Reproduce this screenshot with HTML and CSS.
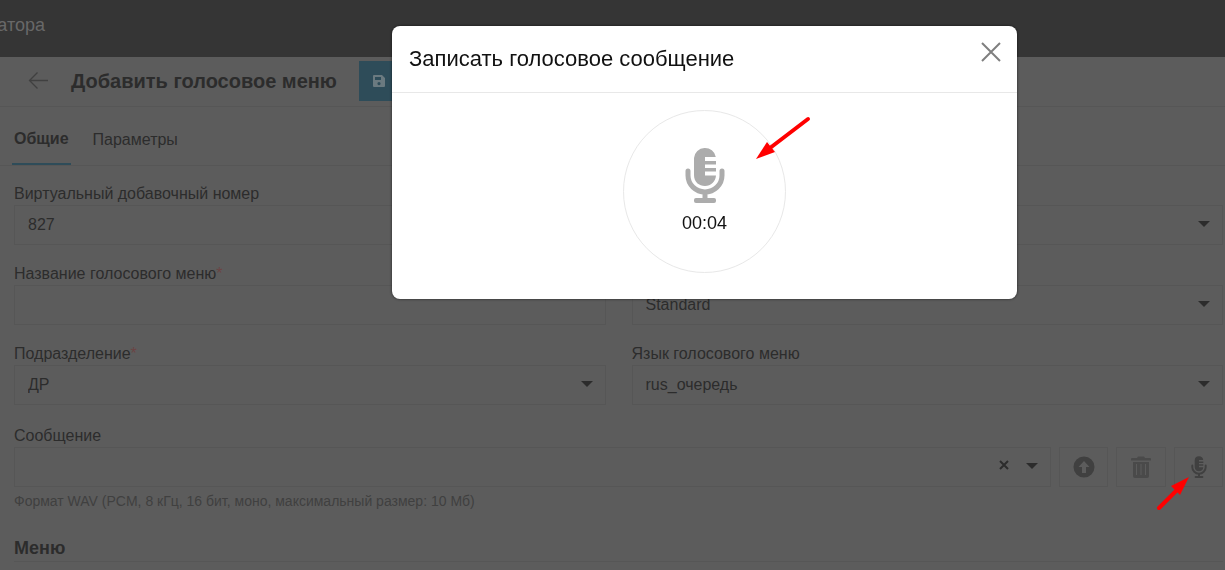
FILE: index.html
```html
<!DOCTYPE html>
<html lang="ru">
<head>
<meta charset="utf-8">
<title>Добавить голосовое меню</title>
<link rel="stylesheet" href="styles.css">
</head>
<body>
<svg class="defs" aria-hidden="true">
  <symbol id="mic" viewBox="0 0 40 56">
    <path d="M9 11a11 11 0 0 1 21.800-1H20v4h11v3.500H20V21h11v3.500H20v4h11c-.5 6-5 10.500-11 10.500S9 35 9 28z"/>
    <path d="M3 24v4.500a17 16.500 0 0 0 34 0V24" fill="none" stroke="currentColor" stroke-width="5" stroke-linecap="round"/>
    <path d="M17.500 46h5v6h-5z"/>
    <rect x="9" y="51" width="22" height="5" rx="2"/>
  </symbol>
</svg>

<header class="topbar"><span class="topbar-title">атора</span></header>

<main>
  <div class="titlebar">
    <button class="back" aria-label="Назад">
      <svg width="20" height="18" viewBox="0 0 20 18" fill="none" stroke="currentColor" stroke-width="1.300"><path d="M20 8.500H1.500M9.500 .500l-8 8 8 8"/></svg>
    </button>
    <h1>Добавить голосовое меню</h1>
    <button class="save" aria-label="Сохранить">
      <svg width="12" height="12" viewBox="0 0 12 12"><path fill="currentColor" fill-rule="evenodd" d="M1 0h8l3 3v8a1 1 0 0 1-1 1H1a1 1 0 0 1-1-1V1a1 1 0 0 1 1-1zM2 2v3h6V2zM6 7a1.600 1.600 0 1 0 0 3.200A1.600 1.600 0 0 0 6 7z"/></svg>
    </button>
  </div>

  <nav class="tabs">
    <a class="tab active" href="#general">Общие</a>
    <a class="tab" href="#params">Параметры</a>
  </nav>

  <form class="form">
    <div class="grid">
      <div class="field">
        <label for="number">Виртуальный добавочный номер</label>
        <input class="control" id="number" value="827">
      </div>
      <div class="field">
        <div class="select"><select class="control" aria-label="Тип"><option></option></select></div>
      </div>
      <div class="field">
        <label for="name">Название голосового меню<span class="required">*</span></label>
        <input class="control" id="name">
      </div>
      <div class="field">
        <div class="select"><select class="control" aria-label="Шаблон"><option>Standard</option></select></div>
      </div>
      <div class="field">
        <label for="dept">Подразделение<span class="required">*</span></label>
        <div class="select"><select class="control" id="dept"><option>ДР</option></select></div>
      </div>
      <div class="field">
        <label for="lang">Язык голосового меню</label>
        <div class="select"><select class="control" id="lang"><option>rus_очередь</option></select></div>
      </div>
    </div>

    <div class="field message">
      <label for="message">Сообщение</label>
      <div class="message-row">
        <div class="select">
          <select class="control" id="message"><option></option></select>
          <button type="button" class="clear" aria-label="Очистить">
            <svg width="10" height="10" viewBox="0 0 10 10" fill="none" stroke="currentColor" stroke-width="2"><path d="M1 1l8 8M9 1L1 9"/></svg>
          </button>
        </div>
        <button type="button" class="tool" aria-label="Загрузить">
          <svg width="22" height="22" viewBox="0 0 22 22"><path fill="currentColor" fill-rule="evenodd" d="M11 .500a10.500 10.500 0 1 0 0 21 10.500 10.500 0 0 0 0-21zM11 5l5.500 6H13v6H9v-6H5.500z"/></svg>
        </button>
        <button type="button" class="tool muted" aria-label="Удалить">
          <svg width="20" height="22" viewBox="0 0 20 22"><path fill="currentColor" fill-rule="evenodd" d="M1 2h5l1-1.500h6L14 2h5q1 0 1 1v1.500H0V3q0-1 1-1zM2 6h16v14q0 2-2 2H4q-2 0-2-2zM5 8v11h1V8zM9.500 8v11h1V8zM14 8v11h1V8z"/></svg>
        </button>
        <button type="button" class="tool" aria-label="Записать">
          <svg width="16" height="22"><use href="#mic"/></svg>
        </button>
      </div>
      <p class="hint">Формат WAV (PCM, 8 кГц, 16 бит, моно, максимальный размер: 10 Мб)</p>
    </div>

    <h2>Меню</h2>
  </form>
</main>

<section class="modal" role="dialog" aria-labelledby="modal-title">
  <div class="modal-head">
    <h3 id="modal-title">Записать голосовое сообщение</h3>
    <button class="close" aria-label="Закрыть">
      <svg width="20" height="20" viewBox="0 0 20 20" fill="none" stroke="currentColor" stroke-width="2"><path d="M1 1l18 18M19 1L1 19"/></svg>
    </button>
  </div>
  <div class="modal-body">
    <button class="record">
      <svg width="40" height="56"><use href="#mic"/></svg>
      <span class="time">00:04</span>
    </button>
  </div>
</section>

<svg class="arrow arrow-record" width="56" height="46" viewBox="0 0 56 46" aria-hidden="true"><path d="M52 4L14 33" stroke="red" stroke-width="4" stroke-linecap="round"/><path d="M0 44L11 27l8 10z" fill="red"/></svg>
<svg class="arrow arrow-mic" width="36" height="36" viewBox="0 0 36 36" aria-hidden="true"><path d="M4 32L21 15" stroke="red" stroke-width="4" stroke-linecap="round"/><path d="M34 1L16 10l9 9z" fill="red"/></svg>
</body>
</html>
```
FILE: styles.css
```css
* { box-sizing: border-box; }

body {
  margin: 0;
  min-height: 100vh;
  overflow: hidden;
  background: #5c5c5c;
  color: #2c2c2c;
  font: 16px/20px "Liberation Sans", Arial, sans-serif;
}

button {
  display: flex;
  align-items: center;
  justify-content: center;
  padding: 0;
  border: 0;
  background: none;
  color: inherit;
  font: inherit;
}

svg { fill: currentColor; }
.defs { position: absolute; width: 0; height: 0; }

.topbar {
  height: 57px;
  padding-top: 15px;
  background: #353535;
  color: #686868;
  font-size: 18px;
}
.topbar-title {
  display: flex;
  justify-content: flex-end;
  width: 45px;
}

.titlebar {
  display: flex;
  align-items: center;
  height: 50px;
  padding: 0 0 1px 28px;
  border-bottom: 1px solid #565656;
}
.back { width: 20px; margin-right: 23px; color: #404040; }
.back svg { fill: none; }
h1 { margin: 0 22px 0 0; font-size: 20px; line-height: 24px; }
.save { width: 40px; height: 40px; background: #2e4c59; color: #6b7a80; }

.tabs {
  display: flex;
  gap: 20px;
  height: 59px;
  padding-left: 12px;
  border-bottom: 1px solid #565656;
}
.tab {
  height: 58px;
  padding: 23px 2px 0;
  color: inherit;
  text-decoration: none;
}
.tab.active { padding-top: 22px; border-bottom: 2px solid #2e4c59; font-weight: bold; }

.form { padding: 18px 2px 0 14px; }
.grid {
  display: grid;
  grid-template-columns: 1fr 1fr;
  gap: 19px 26px;
}
.field {
  display: flex;
  flex-direction: column;
  justify-content: flex-end;
}
.field label { margin-bottom: 1px; line-height: 20px; }
.required { color: #6b4444; }

.control {
  display: block;
  width: 100%;
  height: 40px;
  padding: 0 13px;
  border: 1px solid #565656;
  border-radius: 0;
  background: transparent;
  color: inherit;
  font: inherit;
  appearance: none;
  outline: 0;
}
.select { position: relative; }
.select::after {
  content: "";
  position: absolute;
  top: 16px;
  right: 13px;
  border: 6px solid transparent;
  border-top-color: #2c2c2c;
  border-bottom: 0;
}

.message { margin-top: 21px; }
.message-row { display: flex; gap: 8px; }
.message-row .select { flex: 1; }
.clear { position: absolute; top: 13px; right: 42px; }
.tool {
  width: 49px;
  height: 40px;
  border: 1px solid #565656;
  color: #404040;
}
.tool.muted { width: 50px; color: #4a4a4a; }
.hint { margin: 4px 0 0; color: #404040; font-size: 14px; line-height: 20px; }

h2 {
  margin: 26px 0 0;
  padding-bottom: 2px;
  border-bottom: 1px solid #565656;
  font-size: 18px;
  line-height: 22px;
}

.modal {
  position: fixed;
  top: 26px;
  left: 392px;
  width: 625px;
  border-radius: 8px;
  background: #fff;
  color: #111;
  box-shadow: 0 0 2px 1px rgba(0, 0, 0, .3);
}
.modal-head {
  display: flex;
  align-items: flex-start;
  justify-content: space-between;
  height: 67px;
  padding: 16px 16px 0 17px;
  border-bottom: 1px solid #e8e8e8;
}
h3 { margin: 0; font-size: 22px; font-weight: normal; line-height: 34px; }
.close { color: #7f7f7f; }
.modal-body { display: flex; justify-content: center; padding: 17px 0 26px; }
.record {
  flex-direction: column;
  gap: 9px;
  width: 163px;
  height: 163px;
  padding-bottom: 2px;
  border: 1px solid #e8e8e8;
  border-radius: 50%;
  color: #acacac;
}
.time { color: #111; font-size: 18px; line-height: 22px; }

.arrow { position: absolute; }
.arrow-record { top: 115px; left: 756px; }
.arrow-mic { top: 476px; left: 1155px; }
```
